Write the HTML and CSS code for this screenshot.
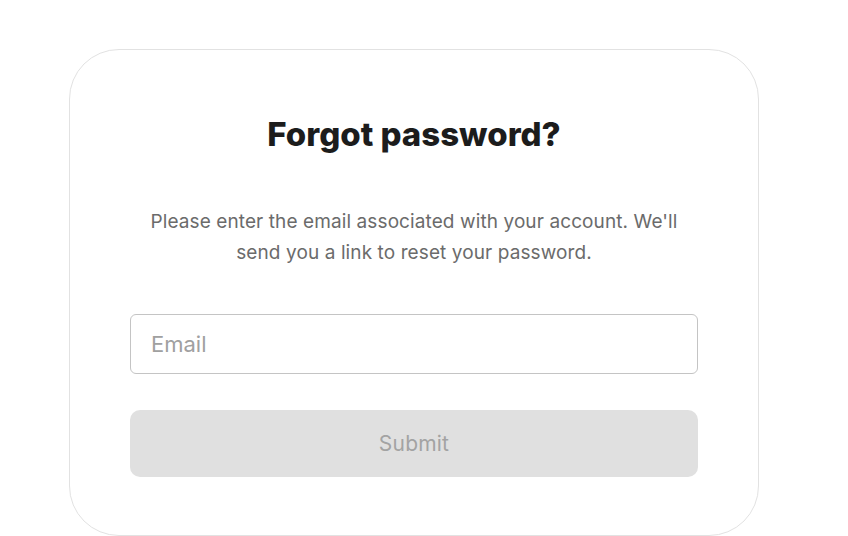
FILE: index.html
```html
<!DOCTYPE html>
<html>
<head>
<meta charset="utf-8">
<link rel="stylesheet" href="styles.css">
</head>
<body>
<div class="card">
  <h1 class="title">Forgot password?</h1>
  <p class="desc">Please enter the email associated with your account. We'll send you a link to reset your password.</p>
  <input class="email" type="text" placeholder="Email">
  <button class="submit" disabled>Submit</button>
</div>
</body>
</html>
```
FILE: styles.css
```css
html, body {
  margin: 0;
  padding: 0;
  background: #ffffff;
  font-family: "Inter", "Noto Sans", sans-serif;
  overflow: hidden;
}
.card {
  box-sizing: border-box;
  margin: 49px 0 0 69px;
  width: 690px;
  height: 487px;
  border: 1px solid #e2e2e2;
  border-radius: 50px;
  padding: 0 60px;
  display: flex;
  flex-direction: column;
}
.title {
  margin: 64px 0 0;
  text-align: center;
  font-size: 33px;
  font-weight: 800;
  line-height: 40px;
  color: #1c1c1c;
}
.desc {
  margin: 52px 14px 0;
  text-align: center;
  font-size: 19px;
  line-height: 31px;
  letter-spacing: 0.1px;
  color: #6b6b6b;
}
.email {
  box-sizing: border-box;
  margin-top: 46px;
  width: 100%;
  height: 60px;
  flex-shrink: 0;
  border: 1px solid #c4c4c4;
  border-radius: 6px;
  padding: 0 20px;
  font-family: inherit;
  font-size: 22px;
  color: #333;
  outline: none;
}
.email::placeholder {
  color: #a0a0a0;
}
.submit {
  margin-top: 36px;
  width: 100%;
  height: 67px;
  flex-shrink: 0;
  border: none;
  border-radius: 10px;
  background: #e0e0e0;
  color: #a3a3a3;
  font-family: inherit;
  font-size: 21px;
  letter-spacing: 0.2px;
}
```
